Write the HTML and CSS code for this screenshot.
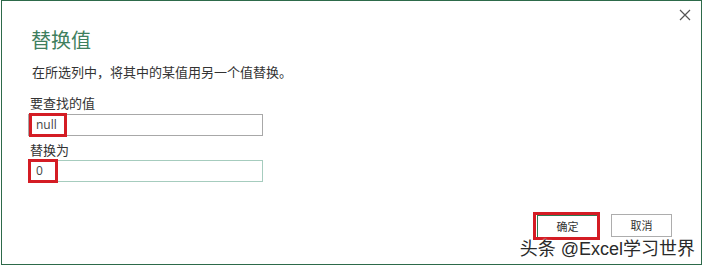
FILE: index.html
```html
<!DOCTYPE html>
<html lang="zh-CN">
<head>
<meta charset="utf-8">
<title>替换值</title>
<link rel="stylesheet" href="styles.css">
</head>
<body>
<div class="dialog">
  <div class="topbar">
    <svg class="close" width="12" height="12" viewBox="0 0 12 12"><path d="M1 1 L11 11 M11 1 L1 11" stroke="#555" stroke-width="1.2" fill="none"/></svg>
  </div>
  <div class="body">
    <h1 class="title">替换值</h1>
    <p class="desc">在所选列中，将其中的某值用另一个值替换。</p>
    <label class="label">要查找的值</label>
    <div class="field">
      <div class="input">null</div>
      <span class="mark mark-find"></span>
    </div>
    <label class="label label-second">替换为</label>
    <div class="field">
      <div class="input input-focus">0</div>
      <span class="mark mark-replace"></span>
    </div>
  </div>
  <div class="footer">
    <div class="btn-wrap">
      <button class="btn btn-ok">确定</button>
      <span class="mark mark-ok"></span>
    </div>
    <button class="btn">取消</button>
  </div>
  <div class="watermark">头条 @Excel学习世界</div>
</div>
</body>
</html>
```

FILE: styles.css
```css
* { box-sizing: border-box; }
html, body { margin: 0; padding: 0; background: #fff; }
body {
  font-family: "Noto Sans", "Noto Sans CJK SC", sans-serif;
  color: #333;
}
.dialog {
  position: relative;
  width: 701px;
  height: 265px;
  margin-left: 1px;
  border: 1px solid #2d6a4a;
  display: flex;
  flex-direction: column;
  background: #fff;
}
.topbar {
  height: 27px;
  display: flex;
  justify-content: flex-end;
  align-items: center;
  padding-right: 10px;
}
.close { display: block; }
.body {
  padding-left: 26px;
  display: flex;
  flex-direction: column;
  align-items: flex-start;
}
.title {
  margin: 0 0 0 3px;
  font-family: "Noto Sans CJK SC", sans-serif;
  font-weight: 400;
  font-size: 20px;
  line-height: 24px;
  color: #3f7f5e;
}
.desc {
  margin: 11px 0 0 4px;
  font-family: "Noto Sans CJK SC", sans-serif;
  font-size: 13px;
  line-height: 18px;
  color: #333;
}
.label {
  margin: 13px 0 0 2px;
  font-family: "Noto Sans CJK SC", sans-serif;
  font-size: 13px;
  line-height: 18px;
  color: #333;
}
.label-second { margin-top: 5px; }
.field {
  position: relative;
  margin-top: 2px;
}
.label-second + .field { margin-top: 1px; }
.input {
  width: 235px;
  height: 22px;
  border: 1px solid #a8a8a8;
  padding-left: 7px;
  font-family: "Open Sans", "Noto Sans", sans-serif;
  font-size: 12px;
  line-height: 20px;
  color: #444;
}
.input-focus { border-color: #a6ccbe; }
.mark {
  position: absolute;
  border: 3px solid #d41c24;
  pointer-events: none;
}
.mark-find { left: 1px; top: -1px; width: 38px; height: 24px; }
.mark-replace { left: 0; top: -1px; width: 30px; height: 24px; }
.footer {
  margin-top: 32px;
  display: flex;
  justify-content: flex-end;
  gap: 13px;
  padding-right: 29px;
}
.btn-wrap { position: relative; }
.btn {
  width: 61px;
  height: 23px;
  margin: 0;
  padding: 0;
  background: #fff;
  border: 1px solid #adadad;
  font-family: "Noto Sans CJK SC", sans-serif;
  font-size: 11px;
  line-height: 21px;
  color: #333;
}
.btn-ok { border-color: #2d7a52; }
.mark-ok { left: -4px; top: -2px; right: -2px; bottom: -2px; }
.watermark {
  position: absolute;
  right: 6px;
  bottom: 4px;
  font-family: "Liberation Sans", "Noto Sans CJK SC", sans-serif;
  font-size: 18px;
  line-height: 22px;
  color: #2a2a2a;
  text-shadow: 0 0 2px #fff, 0 0 2px #fff;
}
```
